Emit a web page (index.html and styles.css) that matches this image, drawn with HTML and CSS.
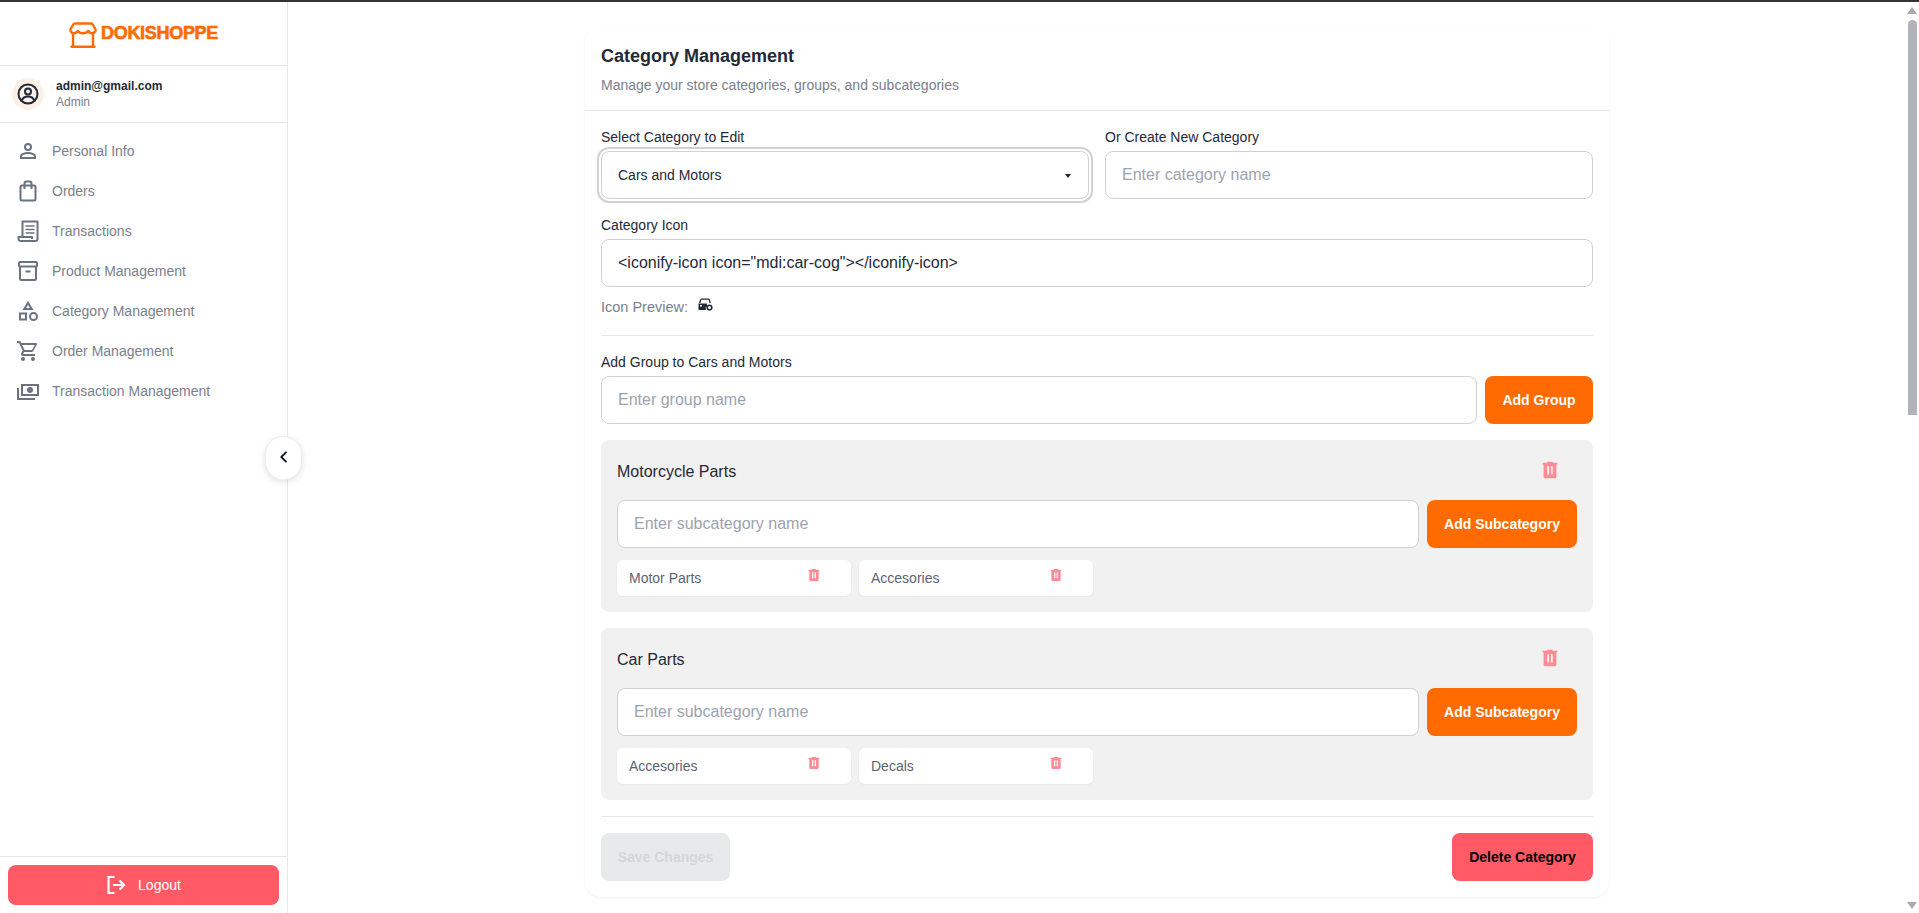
FILE: index.html
```html
<!DOCTYPE html>
<html lang="en">
<head>
<meta charset="utf-8">
<title>Category Management</title>
<link rel="stylesheet" href="styles.css">
</head>
<body>
<div class="app">
  <aside class="sidebar">
    <div class="logo">
      <svg class="logo-icon" viewBox="0 0 28 26" fill="none" stroke="#ff6b00" stroke-width="2.400" stroke-linejoin="round" stroke-linecap="round"><path d="M6 1.500h16c.8 0 1.400.3 1.800 1L26.600 7.500c.3 2.400-1.800 3.700-3.600 3.700c-1.700 0-2.900-.8-3.700-2.300c-1 1.500-3 2.300-5.300 2.300s-4.300-.8-5.300-2.300c-.8 1.500-2 2.300-3.700 2.300c-1.800 0-3.900-1.300-3.600-3.700L4.200 2.500c.4-.7 1-1 1.800-1z"/><path d="M4 11.500V24.500M24 11.500V24.500"/><path d="M2.500 24.800h23"/></svg>
      <span class="logo-text">DOKISHOPPE</span>
    </div>
    <div class="user">
      <div class="avatar">
        <svg viewBox="0 0 24 24" class="avatar-icon" fill="none" stroke="#1f2937" stroke-width="2"><circle cx="12" cy="12" r="9.500"/><circle cx="12" cy="9.500" r="3"/><path d="M5.500 19c1-3 3.500-4.500 6.500-4.500s5.500 1.500 6.500 4.500"/></svg>
      </div>
      <div class="user-text">
        <div class="user-mail">admin@gmail.com</div>
        <div class="user-role">Admin</div>
      </div>
    </div>
    <nav class="nav">
      <a class="nav-item"><svg class="nav-icon" viewBox="0 0 24 24"><path d="M12 4a4 4 0 0 1 4 4a4 4 0 0 1-4 4a4 4 0 0 1-4-4a4 4 0 0 1 4-4m0 2a2 2 0 0 0-2 2a2 2 0 0 0 2 2a2 2 0 0 0 2-2a2 2 0 0 0-2-2m0 7c2.670 0 8 1.330 8 4v3H4v-3c0-2.670 5.330-4 8-4m0 1.900c-2.970 0-6.100 1.460-6.100 2.100v1.100h12.200V17c0-.64-3.130-2.100-6.100-2.100Z"/></svg>Personal Info</a>
      <a class="nav-item"><svg class="nav-icon nav-line" viewBox="0 0 24 24"><rect x="4.500" y="6.500" width="15" height="15" rx="1.500"/><path d="M8.500 10V4.500a2 2 0 0 1 2-2h3a2 2 0 0 1 2 2V10"/></svg>Orders</a>
      <a class="nav-item"><svg class="nav-icon nav-line" viewBox="0 0 24 24"><path d="M6.500 18V2.500h15V20a2 2 0 0 1-2 2H5a2.200 2.200 0 0 1-2.500-2v-2h13.500v2"/><path d="M9.500 7h9M9.500 10.500h9M9.500 14h9" stroke-width="1.600"/></svg>Transactions</a>
      <a class="nav-item"><svg class="nav-icon nav-line" viewBox="0 0 24 24"><rect x="3" y="3" width="18" height="4.500" rx="1"/><path d="M4 7.500V20a1 1 0 0 0 1 1h14a1 1 0 0 0 1-1V7.500"/><path d="M9.500 12.500h5"/></svg>Product Management</a>
      <a class="nav-item"><svg class="nav-icon" viewBox="0 0 24 24"><path d="M11 13.500v8H3v-8h8m-2 2H5v4h4v-4M12 2l5.500 9h-11L12 2m0 3.860L10.080 9h3.840L12 5.860M17.500 13c2.500 0 4.500 2 4.500 4.500S20 22 17.500 22S13 20 13 17.500s2-4.500 4.500-4.500m0 2a2.500 2.500 0 0 0-2.500 2.500a2.500 2.500 0 0 0 2.500 2.500a2.500 2.500 0 0 0 2.500-2.500a2.500 2.500 0 0 0-2.500-2.500Z"/></svg>Category Management</a>
      <a class="nav-item"><svg class="nav-icon" viewBox="0 0 24 24"><path d="M17 18a2 2 0 0 1 2 2a2 2 0 0 1-2 2a2 2 0 0 1-2-2c0-1.110.89-2 2-2M1 2h3.270l.94 2H20a1 1 0 0 1 1 1c0 .17-.05.34-.12.5l-3.580 6.470c-.34.61-1 1.030-1.750 1.030H8.100l-.9 1.630l-.03.12a.25.25 0 0 0 .25.25H19v2H7a2 2 0 0 1-2-2c0-.35.09-.68.24-.96l1.360-2.450L3 4H1V2m6 16a2 2 0 0 1 2 2a2 2 0 0 1-2 2a2 2 0 0 1-2-2c0-1.110.89-2 2-2m9-7l2.780-5H6.140l2.360 5H16Z"/></svg>Order Management</a>
      <a class="nav-item"><svg class="nav-icon" viewBox="0 0 24 24"><path fill-rule="evenodd" d="M5 5h18v12H5V5m9 3a3 3 0 0 1 3 3a3 3 0 0 1-3 3a3 3 0 0 1-3-3a3 3 0 0 1 3-3M7 7v8h14V7H7m-6 2h2v10h16v2H1V9Z"/></svg>Transaction Management</a>
    </nav>
    <div class="side-foot">
      <button class="logout">
        <svg class="logout-icon" viewBox="0 0 20 20" fill="none" stroke="#fff" stroke-width="2.200"><path d="M8.500 2H2.500v16h6"/><path d="M7 10h11M13.500 5.500 18 10l-4.500 4.500"/></svg>
        Logout
      </button>
    </div>
    <button class="collapse" aria-label="Collapse sidebar">
      <svg viewBox="0 0 24 24" class="collapse-icon" fill="none" stroke="#111827" stroke-width="2.800" stroke-linecap="round" stroke-linejoin="round"><path d="M15 5l-7 7 7 7"/></svg>
    </button>
  </aside>

  <main class="main">
    <section class="card">
      <header class="card-head">
        <h1 class="title">Category Management</h1>
        <p class="subtitle">Manage your store categories, groups, and subcategories</p>
      </header>
      <div class="card-body">
        <div class="two-col">
          <div class="field">
            <label class="label">Select Category to Edit</label>
            <div class="select-wrap"><select class="select"><option>Cars and Motors</option></select></div>
          </div>
          <div class="field">
            <label class="label">Or Create New Category</label>
            <input class="input" placeholder="Enter category name">
          </div>
        </div>
        <div class="field field-icon">
          <label class="label">Category Icon</label>
          <input class="input" value='&lt;iconify-icon icon="mdi:car-cog"&gt;&lt;/iconify-icon&gt;'>
        </div>
        <div class="preview">
          <span class="preview-label">Icon Preview:</span>
          <svg class="preview-icon" viewBox="0 0 16 14" fill="#1f2937"><path d="M2 5 3 1.800C3.300 1 3.900.6 4.700.6h6.600c.8 0 1.400.4 1.700 1.200L13.800 5h-1.300l-.7-2.800c-.1-.3-.3-.4-.6-.4H4.800c-.3 0-.5.100-.6.400L3.500 5z"/><path d="M1.500 5.500h8.500v3.200H8.800V12H1.500zM3 7v1.500h2V7z" fill-rule="evenodd"/><circle cx="12.500" cy="9.500" r="2.300" fill="none" stroke="#1f2937" stroke-width="1.600"/></svg>
        </div>
        <hr class="rule rule-a">
        <div class="field">
          <label class="label">Add Group to Cars and Motors</label>
          <div class="add-row">
            <input class="input" placeholder="Enter group name">
            <button class="btn btn-orange btn-group">Add Group</button>
          </div>
        </div>

        <div class="panel panel-first">
          <div class="panel-head">
            <span class="panel-title">Motorcycle Parts</span>
            <svg class="trash trash-lg" viewBox="0 0 24 24"><path d="M9 3v1H4v2h1v13a2 2 0 0 0 2 2h10a2 2 0 0 0 2-2V6h1V4h-5V3H9m0 5h2v9H9V8m4 0h2v9h-2V8Z"/></svg>
          </div>
          <div class="add-row">
            <input class="input" placeholder="Enter subcategory name">
            <button class="btn btn-orange btn-sub">Add Subcategory</button>
          </div>
          <div class="chips">
            <div class="chip"><span>Motor Parts</span><svg class="trash trash-sm" viewBox="0 0 24 24"><path d="M9 3v1H4v2h1v13a2 2 0 0 0 2 2h10a2 2 0 0 0 2-2V6h1V4h-5V3H9m0 5h2v9H9V8m4 0h2v9h-2V8Z"/></svg></div>
            <div class="chip"><span>Accesories</span><svg class="trash trash-sm" viewBox="0 0 24 24"><path d="M9 3v1H4v2h1v13a2 2 0 0 0 2 2h10a2 2 0 0 0 2-2V6h1V4h-5V3H9m0 5h2v9H9V8m4 0h2v9h-2V8Z"/></svg></div>
          </div>
        </div>

        <div class="panel">
          <div class="panel-head">
            <span class="panel-title">Car Parts</span>
            <svg class="trash trash-lg" viewBox="0 0 24 24"><path d="M9 3v1H4v2h1v13a2 2 0 0 0 2 2h10a2 2 0 0 0 2-2V6h1V4h-5V3H9m0 5h2v9H9V8m4 0h2v9h-2V8Z"/></svg>
          </div>
          <div class="add-row">
            <input class="input" placeholder="Enter subcategory name">
            <button class="btn btn-orange btn-sub">Add Subcategory</button>
          </div>
          <div class="chips">
            <div class="chip"><span>Accesories</span><svg class="trash trash-sm" viewBox="0 0 24 24"><path d="M9 3v1H4v2h1v13a2 2 0 0 0 2 2h10a2 2 0 0 0 2-2V6h1V4h-5V3H9m0 5h2v9H9V8m4 0h2v9h-2V8Z"/></svg></div>
            <div class="chip"><span>Decals</span><svg class="trash trash-sm" viewBox="0 0 24 24"><path d="M9 3v1H4v2h1v13a2 2 0 0 0 2 2h10a2 2 0 0 0 2-2V6h1V4h-5V3H9m0 5h2v9H9V8m4 0h2v9h-2V8Z"/></svg></div>
          </div>
        </div>

        <hr class="rule rule-b">
        <div class="actions">
          <button class="btn btn-save" disabled>Save Changes</button>
          <button class="btn btn-delete">Delete Category</button>
        </div>
      </div>
    </section>
  </main>
</div>
<div class="scrollbar" aria-hidden="true">
  <span class="sb-up"></span>
  <span class="sb-thumb"></span>
  <span class="sb-down"></span>
</div>
</body>
</html>
```

FILE: styles.css
```css
* { box-sizing: border-box; }
html, body { margin: 0; height: 100%; overflow: hidden; background: #fff; }
body { font-family: "Liberation Sans", Arial, sans-serif; color: #1f2937; font-size: 14px; }

.app { display: flex; height: 913px; border-top: 2px solid #333; }

/* Sidebar */
.sidebar { position: relative; width: 288px; flex: none; display: flex; flex-direction: column; border-right: 1px solid #e5e7eb; background: #fff; }
.logo { height: 64px; flex: none; display: flex; align-items: center; justify-content: center; gap: 4px; padding-top: 2px; border-bottom: 1px solid #e5e7eb; }
.logo-icon { width: 28px; height: 26px; }
.logo-text { font-size: 18px; font-weight: 700; line-height: 20px; letter-spacing: -.3px; color: #ff6b00; -webkit-text-stroke: .6px #ff6b00; margin-top: -4px; }
.user { height: 57px; flex: none; display: flex; align-items: center; gap: 12px; padding-left: 12px; border-bottom: 1px solid #e5e7eb; }
.avatar { width: 32px; height: 32px; border-radius: 50%; background: #fdf0e6; display: flex; align-items: center; justify-content: center; }
.avatar-icon { width: 24px; height: 24px; }
.user-mail { font-size: 12px; font-weight: 600; line-height: 16px; color: #1f2937; }
.user-role { font-size: 12px; line-height: 16px; color: #7a808c; }
.nav { padding-top: 8px; display: flex; flex-direction: column; }
.nav-item { height: 40px; display: flex; align-items: center; gap: 12px; padding-left: 16px; font-size: 14px; color: #7a808c; }
.nav-icon { width: 24px; height: 24px; flex: none; fill: #6b7280; }
.nav-line { fill: none; stroke: #6b7280; stroke-width: 2; stroke-linejoin: round; }
.side-foot { margin-top: auto; border-top: 1px solid #e5e7eb; padding: 8px; }
.logout { width: 100%; height: 40px; border: 0; border-radius: 8px; background: #ff5a65; color: #fff; font: 14px "Liberation Sans", Arial, sans-serif; display: flex; align-items: center; justify-content: center; gap: 12px; }
.logout-icon { width: 20px; height: 20px; }
.collapse { position: absolute; left: 265px; top: 434px; width: 37px; height: 44px; padding: 0; border: 1px solid #eeeeee; border-radius: 18px; background: #fff; box-shadow: 0 2px 6px rgba(0,0,0,.12); display: flex; align-items: center; justify-content: center; }
.collapse-icon { width: 16px; height: 16px; margin-bottom: 3px; }

/* Main */
.main { flex: 1; min-width: 0; display: flex; justify-content: center; align-items: flex-start; padding-right: 13px; }
.card { width: 1024px; margin-top: 24px; height: 871px; background: #fff; border-radius: 16px; box-shadow: 0 1px 3px rgba(0,0,0,.06); }
.card-head { height: 85px; padding: 16px 16px 0; border-bottom: 1px solid #e5e7eb; }
.title { margin: 0; font-size: 18px; line-height: 28px; font-weight: 700; color: #1f2937; }
.subtitle { margin: 5px 0 0; font-size: 14px; line-height: 20px; color: #7a808c; }
.card-body { padding: 16px 16px 0; }

.two-col { display: grid; grid-template-columns: 1fr 1fr; gap: 16px; }
.field { display: flex; flex-direction: column; }
.field-icon { margin-top: 16px; }
.label { font-size: 14px; line-height: 20px; margin-bottom: 4px; color: #1f2937; }
.input, .select { width: 100%; height: 48px; flex: none; border: 1px solid #d1d1d1; border-radius: 8px; padding: 0 16px; background: #fff; color: #1f2937; font: 16px "Liberation Sans", Arial, sans-serif; outline: 0; }
.input::placeholder { color: #9ca3af; opacity: 1; }
.select-wrap { position: relative; }
.select { display: block; appearance: none; -webkit-appearance: none; font-size: 14px; outline: 2px solid #d1d1d1; outline-offset: 2px; }
.select-wrap::after { content: ""; position: absolute; right: 18px; top: 23px; border-style: solid; border-width: 4px 3.500px 0; border-color: #1f2937 transparent transparent; }
.preview { display: flex; align-items: flex-start; margin-top: 10px; height: 20px; }
.preview-label { font-size: 14.500px; line-height: 20px; color: #7a808c; }
.preview-icon { width: 16px; height: 14px; margin: 1px 0 0 9px; }
.rule { border: 0; height: 1px; background: #e5e7eb; margin: 0; }
.rule-a { margin: 18px 0 16px; }
.rule-b { margin: 16px 0; }

.add-row { display: flex; gap: 8px; }
.add-row .input { flex: 1; min-width: 0; width: auto; }
.btn { height: 48px; flex: none; border: 0; border-radius: 8px; font: 700 14px "Liberation Sans", Arial, sans-serif; padding: 0 18px; }
.btn-orange { background: #ff6b00; color: #fff; }
.btn-group { width: 108px; padding: 0; }
.btn-sub { width: 150px; padding: 0; }
.btn-save { width: 129px; padding: 0; background: #e8e9eb; color: #d4d6da; }
.btn-delete { width: 141px; padding: 0; background: #ff5a65; color: #000; }
.actions { display: flex; justify-content: space-between; }

.panel { margin-top: 16px; padding: 16px; height: 172px; background: #f1f1f1; border-radius: 8px; }
.panel-head { height: 32px; margin-bottom: 12px; display: flex; align-items: center; justify-content: space-between; padding-right: 16px; }
.panel-title { font-size: 16px; line-height: 30px; color: #1f2937; }
.trash { flex: none; fill: #ff8b95; }
.trash-lg { width: 22px; height: 22px; margin-bottom: 5px; }
.trash-sm { width: 16px; height: 16px; margin: 0 29px 6px 0; }
.chips { display: grid; grid-template-columns: repeat(4, 1fr); gap: 8px; margin-top: 12px; }
.chip { height: 36px; display: flex; align-items: center; justify-content: space-between; padding-left: 12px; background: #fff; border-radius: 6px; box-shadow: 0 1px 2px rgba(0,0,0,.04); font-size: 14px; color: #5b6472; }

/* Drawn scrollbar, it lies over the page edge */
.scrollbar { position: fixed; top: 2px; right: 0; bottom: 0; width: 15px; background: #fff; }
.sb-thumb { position: absolute; left: 4px; right: 2px; top: 18px; height: 395px; border-radius: 5px 5px 0 0; background: #b1b3b8; }
.sb-up, .sb-down { position: absolute; left: 3px; width: 0; height: 0; border-style: solid; border-color: transparent; }
.sb-up { top: 5px; border-width: 0 5px 7px; border-bottom-color: #a9abb0; }
.sb-down { bottom: 4px; border-width: 7px 5px 0; border-top-color: #a9abb0; }
```
